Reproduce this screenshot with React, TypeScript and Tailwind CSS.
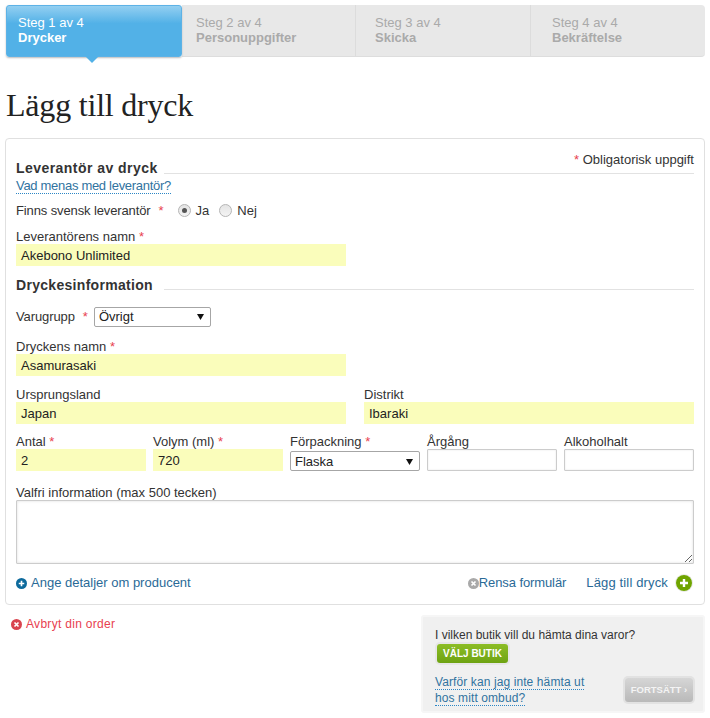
const font = { fontFamily: '"Liberation Sans", Arial, sans-serif' };

function Req({ className = '' }: { className?: string }) {
  return <span className={`text-[#e8414f] ${className}`}>*</span>;
}

function Field({ label, required, value, className = '' }: { label: string; required?: boolean; value?: string; className?: string }) {
  return (
    <div className={className}>
      <div className="h-[15px] leading-[15px] text-[#333]">
        {label} {required && <Req />}
      </div>
      <div className="h-[22px] bg-[#fafdbb] pl-[5px] pt-px leading-[22px] text-[#222]">{value}</div>
    </div>
  );
}

function EmptyField({ label, className = '' }: { label: string; className?: string }) {
  return (
    <div className={className}>
      <div className="h-[15px] leading-[15px] text-[#333]">{label}</div>
      <div className="h-[22px] rounded-[1px] border border-[#ccc] bg-white shadow-[inset_0_0_2px_#e5e5e5]" />
    </div>
  );
}

function FakeSelect({ value, className = '' }: { value: string; className?: string }) {
  return (
    <div className={`flex h-5 items-center justify-between rounded-[2px] border border-[#a6a6a6] bg-white pl-1 pr-[6px] text-[#222] ${className}`}>
      <span>{value}</span>
      <svg width="7" height="6" viewBox="0 0 7 6" className="shrink-0"><path d="M0 0h7L3.500 6z" fill="#111" /></svg>
    </div>
  );
}

function RoundIcon({ color, kind, size = 12 }: { color: string; kind: 'plus' | 'x'; size?: number }) {
  return (
    <svg width={size} height={size} viewBox="0 0 12 12" className="block shrink-0">
      <circle cx="6" cy="6" r="6" fill={color} />
      {kind === 'plus' ? (
        <path d="M6 3v6M3 6h6" stroke="#fff" strokeWidth="1.800" />
      ) : (
        <path d="M3.800 3.800l4.400 4.400M8.200 3.800l-4.400 4.400" stroke="#fff" strokeWidth="1.800" />
      )}
    </svg>
  );
}

function Step({ title, n, className = '' }: { title: string; n: number; className?: string }) {
  return (
    <div className={`pt-[10px] text-[#aaa] ${className}`}>
      <div className="h-[15px] leading-[15px]">Steg {n} av 4</div>
      <div className="h-[15px] font-bold leading-[15px]">{title}</div>
    </div>
  );
}

function Radio({ checked }: { checked?: boolean }) {
  return (
    <span className="flex h-[13px] w-[13px] items-center justify-center rounded-full border border-[#b5b5b5] bg-gradient-to-b from-[#e4e4e4] to-[#f4f4f4]">
      {checked && <span className="h-[5px] w-[5px] rounded-full bg-[#555]" />}
    </span>
  );
}

export default function App() {
  return (
    <div className="relative h-[718px] w-[710px] overflow-hidden bg-white text-[13px]" style={font}>
      <div className="ml-[6px] mt-[5px] flex h-[52px] w-[699px]">
        <div className="relative z-10 h-[52px] w-[176px] rounded-[3px] border border-[#5db2e6] bg-[linear-gradient(#93cff1,#52b1e7_35%,#52b1e7)] pl-[11px] pt-[9px] text-white shadow-[0_1px_2px_#bbb]">
          <div className="h-[15px] leading-[15px]">Steg 1 av 4</div>
          <div className="h-[15px] font-bold leading-[15px]">Drycker</div>
          <div className="absolute left-[78px] top-[50px] h-0 w-0 border-x-[7px] border-t-[7px] border-x-transparent border-t-[#52b1e7]" />
        </div>
        <div className="flex h-[52px] flex-1 rounded-r-[4px] border-b border-[#ddd] bg-[#e8e8e8]">
          <Step n={2} title="Personuppgifter" className="w-[174px] border-r border-[#dcdcdc] pl-[14px]" />
          <Step n={3} title="Skicka" className="w-[175px] border-r border-[#dcdcdc] pl-[19px]" />
          <Step n={4} title="Bekräftelse" className="flex-1 pl-[21px]" />
        </div>
      </div>

      <h1 className="ml-[6px] mt-[25px] h-[56px] text-[32px] leading-[46px] tracking-[-0.2px] text-[#222]" style={{ fontFamily: '"Liberation Serif", Georgia, serif' }}>
        Lägg till dryck
      </h1>

      <div className="relative ml-[5px] h-[467px] w-[700px] rounded-[4px] border border-[#e0e0e0] px-[10px] pt-[22px]">
        <div className="absolute right-[10px] top-[11px] text-[#333]">
          <Req /> Obligatorisk uppgift
        </div>
        <div className="flex h-[14px] items-end">
          <h2 className="w-[148px] whitespace-nowrap text-[14px] font-bold leading-[14px] tracking-[0.45px] text-[#333]">Leverantör av dryck</h2>
          <div className="mb-px flex-1 border-b border-[#e2e2e2]" />
        </div>
        <div className="mt-px h-[15px]">
          <a className="border-b border-dotted border-[#2c86c5] leading-[14px] tracking-[-0.3px] text-[#31739f]">Vad menas med leverantör?</a>
        </div>
        <div className="mt-[12px] flex h-[15px] items-center text-[#333]">
          <span className="tracking-[-0.12px]">Finns svensk leverantör</span>
          <Req className="ml-[8px]" />
          <span className="ml-[14px]"><Radio checked /></span>
          <span className="ml-[5px]">Ja</span>
          <span className="ml-[10px]"><Radio /></span>
          <span className="ml-[5px]">Nej</span>
        </div>
        <Field label="Leverantörens namn" required value="Akebono Unlimited" className="mt-[11px] w-[330px]" />
        <div className="mt-[10px] flex h-[16px] items-end">
          <h2 className="w-[148px] whitespace-nowrap text-[14px] font-bold leading-[14px] tracking-[0.3px] text-[#333]">Dryckesinformation</h2>
          <div className="mb-[2px] flex-1 border-b border-[#e2e2e2]" />
        </div>
        <div className="mt-[15px] flex h-5 items-center text-[#333]">
          <span className="tracking-[-0.1px]">Varugrupp</span>
          <Req className="ml-2" />
          <FakeSelect value="Övrigt" className="ml-[6px] w-[117px]" />
        </div>
        <Field label="Dryckens namn" required value="Asamurasaki" className="mt-[12px] w-[330px]" />
        <div className="mt-[11px] flex gap-[18px]">
          <Field label="Ursprungsland" value="Japan" className="w-[330px]" />
          <Field label="Distrikt" value="Ibaraki" className="flex-1" />
        </div>
        <div className="mt-[10px] flex gap-[7px]">
          <Field label="Antal" required value="2" className="w-[130px]" />
          <Field label="Volym (ml)" required value="720" className="w-[130px]" />
          <div className="w-[130px]">
            <div className="h-[15px] leading-[15px] text-[#333]">Förpackning <Req /></div>
            <FakeSelect value="Flaska" className="mt-[2px] pt-px" />
          </div>
          <EmptyField label="Årgång" className="w-[130px]" />
          <EmptyField label="Alkoholhalt" className="w-[130px]" />
        </div>
        <div className="mt-[14px] h-[15px] leading-[15px] text-[#333]">Valfri information (max 500 tecken)</div>
        <textarea className="block h-[64px] w-full rounded-[1px] border border-[#ccc] bg-white shadow-[inset_0_0_3px_#ddd]" />
        <div className="mt-[12px] flex h-[14px] items-center text-[#2a6a97]">
          <RoundIcon color="#0d6a9c" kind="plus" size={11} />
          <span className="ml-[4px]">Ange detaljer om producent</span>
          <span className="ml-auto"><RoundIcon color="#a9a9a9" kind="x" size={11} /></span>
          <span className="tracking-[-0.1px]">Rensa formulär</span>
          <span className="ml-[20px] tracking-[0.15px]">Lägg till dryck</span>
          <span className="ml-[8px] mr-[2px] rounded-full shadow-[0_0_0_1px_#e8e8e8]"><RoundIcon color="#6fa400" kind="plus" size={16} /></span>
        </div>
      </div>

      <div className="flex items-start justify-between">
        <div className="ml-[11px] mt-[10px] flex items-center text-[12px] tracking-[0.3px] text-[#e8414f]">
          <RoundIcon color="#d9444f" kind="x" size={11} />
          <span className="ml-[4px]">Avbryt din order</span>
        </div>
        <div className="mr-[5px] mt-[10px] h-[98px] w-[284px] rounded-[3px] border-2 border-[#f6f6f6] bg-[#f0f0f0] pl-[12px] pt-[11px] text-[12px] text-[#333]">
          <div className="h-[15px] leading-[15px]">I vilken butik vill du hämta dina varor?</div>
          <div className="ml-[2px] mt-[1px] block h-[19px] w-[71px] rounded-[3px] bg-[linear-gradient(#8cbd25,#6ea312)] text-center text-[10px] font-bold leading-[19px] text-white shadow-[0_0_0_2px_#e6e6e6]">VÄLJ BUTIK</div>
          <div className="mt-[12px] flex items-start justify-between pr-[10px]">
            <div className="tracking-[0.1px] text-[#31739f]">
              <a className="block w-fit border-b border-dotted border-[#2c86c5] leading-[14px]">Varför kan jag inte hämta ut</a>
              <a className="block w-fit border-b border-dotted border-[#2c86c5] pt-px leading-[14px]">hos mitt ombud?</a>
            </div>
            <div className="mt-[3px] w-[68px] rounded-[3px] bg-[linear-gradient(#d6d6d6,#b9b9b9)] text-center text-[9.5px] font-bold leading-[24px] text-[#f4f4f4] shadow-[0_0_0_2px_#e2e2e2]">FORTSÄTT ›</div>
          </div>
        </div>
      </div>
    </div>
  );
}
